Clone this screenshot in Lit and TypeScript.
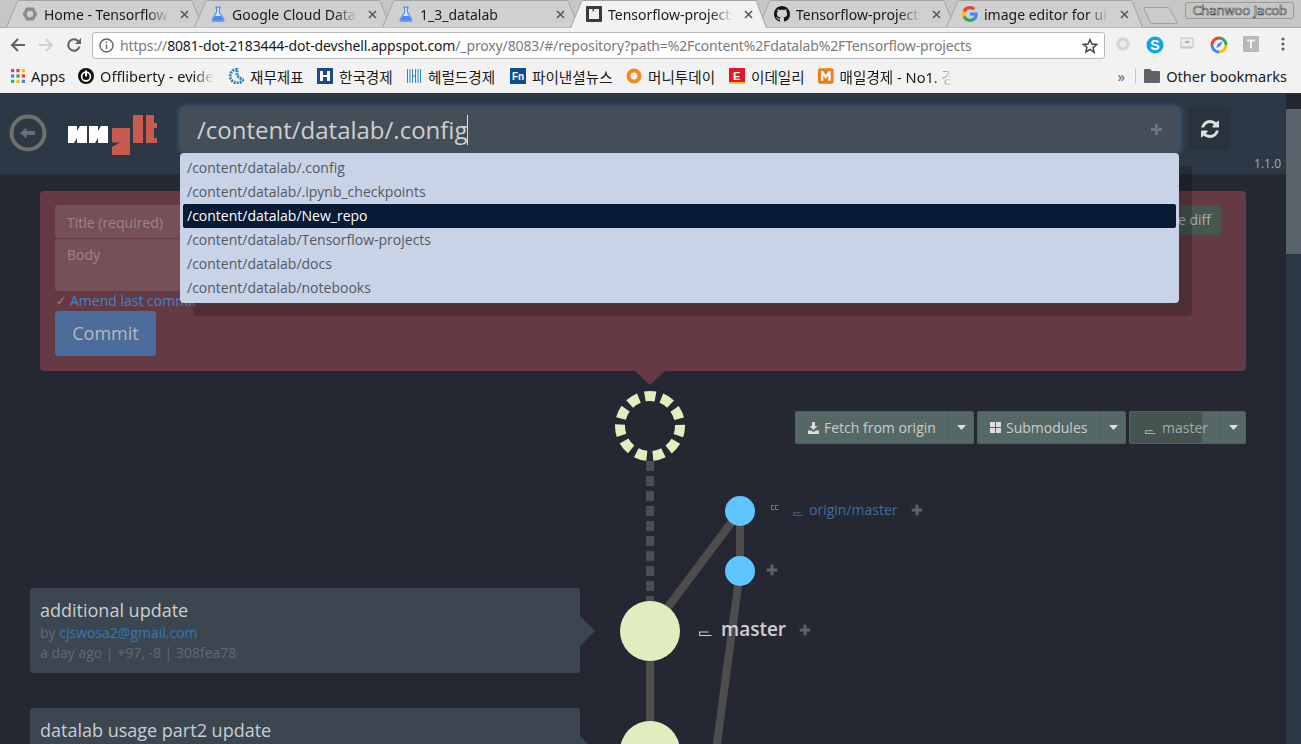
import { LitElement, html, css, svg } from 'lit';
import { customElement } from 'lit/decorators.js';

const flask = html`<svg viewBox="0 0 16 16" width="16" height="16">
  <path d="M6 1h4v1h-.6v4l4.400 7.400c.5 1-.1 1.900-1.200 1.900H3.400c-1.100 0-1.700-.9-1.200-1.900L6.600 6V2H6z" fill="#d6e6fb" stroke="#4a8df0" stroke-width="1.100"/>
  <path d="M4.800 10h6.400l2 3.600c.3.700-.1 1.200-.8 1.200H3.600c-.7 0-1.100-.5-.8-1.200z" fill="#4a8df0"/></svg>`;

const hexIcon = (c: string, hole: string) => html`<svg viewBox="0 0 16 16" width="16" height="16">
  <path d="M4.300 1.500h7.400L15.300 8l-3.600 6.500H4.300L.7 8z" fill="${c}"/><circle cx="8" cy="8" r="3.200" fill="${hole}"/></svg>`;

const tabs = [
  { title: 'Home - Tensorflow', icon: hexIcon('#8b8b8b', '#d0d0d0') },
  { title: 'Google Cloud Datalab', icon: flask },
  { title: '1_3_datalab', icon: flask },
  {
    title: 'Tensorflow-projects',
    active: true,
    icon: html`<svg viewBox="0 0 16 16" width="16" height="16"><rect width="16" height="16" rx="1" fill="#3a3a3a"/><path d="M3 3h3.500v3L8 4.500V3h5v10H3z" fill="#f2f2f2"/></svg>`,
  },
  {
    title: 'Tensorflow-projects',
    icon: html`<svg viewBox="0 0 16 16" width="16" height="16"><path fill="#161614" d="M8 0C3.580 0 0 3.580 0 8c0 3.540 2.290 6.530 5.470 7.590.4.070.55-.17.55-.38 0-.19-.01-.82-.01-1.490-2.010.37-2.530-.49-2.690-.94-.09-.23-.48-.94-.82-1.130-.28-.15-.68-.52-.01-.53.63-.01 1.080.58 1.230.82.720 1.210 1.870.87 2.330.66.070-.52.280-.87.510-1.070-1.780-.2-3.640-.89-3.640-3.950 0-.87.310-1.590.820-2.150-.08-.2-.36-1.020.08-2.120 0 0 .67-.21 2.200.82.640-.18 1.320-.27 2-.27s1.360.09 2 .27c1.530-1.040 2.200-.82 2.200-.82.440 1.100.16 1.920.08 2.120.51.560.82 1.270.82 2.150 0 3.070-1.870 3.750-3.650 3.950.29.250.54.730.54 1.480 0 1.070-.01 1.930-.01 2.200 0 .21.150.46.550.38A8.010 8.010 0 0 0 16 8c0-4.420-3.580-8-8-8z"/></svg>`,
  },
  {
    title: 'image editor for ui design',
    icon: html`<svg viewBox="0 0 16 16" width="16" height="16">
      <path d="M15.700 8.200c0-.6-.05-1.100-.15-1.600H8v3h4.400c-.2 1-.8 1.800-1.600 2.400v2h2.600c1.500-1.400 2.300-3.400 2.300-5.800z" fill="#4285f4"/>
      <path d="M8 16c2.200 0 4-.7 5.400-2l-2.600-2c-.7.500-1.700.800-2.800.800-2.100 0-3.900-1.400-4.600-3.300H.7v2.100C2 14.200 4.800 16 8 16z" fill="#34a853"/>
      <path d="M3.400 9.500c-.4-1-.4-2.100 0-3.100V4.300H.7c-.9 1.800-.9 5.500 0 7.300z" fill="#fbbc05"/>
      <path d="M8 3.200c1.200 0 2.300.4 3.100 1.200l2.300-2.300C12 .8 10.200 0 8 0 4.800 0 2 1.800.7 4.300l2.700 2.100C4.100 4.600 5.900 3.200 8 3.200z" fill="#ea4335"/></svg>`,
  },
];

// width is the slot each bookmark takes in the bar
const bookmarks = [
  { label: 'Apps', width: 67, icon: html`<svg viewBox="0 0 13 13" width="14" height="14"><g>
    ${[['#ea4335', 0, 0], ['#ea4335', 5, 0], ['#fbbc05', 10, 0], ['#4285f4', 0, 5], ['#34a853', 5, 5], ['#ea4335', 10, 5], ['#34a853', 0, 10], ['#fbbc05', 5, 10], ['#4285f4', 10, 10]].map(
      ([c, x, y]) => svg`<rect x="${x}" y="${y}" width="3" height="3" fill="${c}"/>`)}</g></svg>` },
  { label: 'Offliberty - evide', width: 150, fade: true, icon: html`<svg viewBox="0 0 16 16" width="16" height="16"><circle cx="8" cy="8" r="8" fill="#111"/><circle cx="8" cy="8.500" r="4.400" fill="none" stroke="#fff" stroke-width="1.600"/><rect x="7" y="2.500" width="2" height="6" fill="#fff"/></svg>` },
  { label: '재무제표', width: 89, icon: html`<svg viewBox="0 0 16 16" width="16" height="16"><path d="M9 1a7 7 0 1 0 6 11L9 8z" fill="none" stroke="#2b8bb5" stroke-width="3" stroke-dasharray="2 1"/></svg>` },
  { label: '한국경제', width: 89, icon: html`<svg viewBox="0 0 16 16" width="16" height="16"><rect width="16" height="16" fill="#1d4a8c"/><path d="M3 3h3v4h4V3h3v10h-3V9H6v4H3z" fill="#fff"/></svg>` },
  { label: '헤럴드경제', width: 104, icon: html`<svg viewBox="0 0 16 16" width="16" height="16" fill="none" stroke="#2f86c5" stroke-width="1"><path d="M1.500 1v14M4 1v14M6.500 1v14M9.500 1v14M12 1v14M14.500 1v14M6.500 8h3"/></svg>` },
  { label: '파이낸셜뉴스', width: 116, icon: html`<svg viewBox="0 0 16 16" width="16" height="16"><rect width="16" height="16" fill="#0e4c92"/><text x="2" y="12" font-size="10" font-weight="700" font-family="Liberation Sans" fill="#fff">Fn</text></svg>` },
  { label: '머니투데이', width: 103, icon: html`<svg viewBox="0 0 16 16" width="16" height="16"><circle cx="8" cy="8" r="5.500" fill="none" stroke="#f08a18" stroke-width="4"/></svg>` },
  { label: '이데일리', width: 89, icon: html`<svg viewBox="0 0 16 16" width="16" height="16"><rect width="16" height="14" fill="#e3172a"/><rect y="14" width="16" height="2" fill="#f5c518"/><text x="4" y="11.500" font-size="11" font-weight="700" font-family="Liberation Sans" fill="#fff">E</text></svg>` },
  { label: '매일경제 - No1. 경', width: 134, fade: true, icon: html`<svg viewBox="0 0 16 16" width="16" height="16"><rect width="16" height="16" rx="2" fill="#ee7a1a"/><path d="M3 13V3h2.500L8 7l2.500-4H13v10h-2.500V7.500L8 11 5.500 7.500V13z" fill="#fff"/></svg>` },
];

@customElement('browser-chrome')
export class BrowserChrome extends LitElement {
  static styles = css`
    :host {
      display: block;
      font-family: 'Noto Sans', 'Noto Sans CJK KR', sans-serif;
      color: #1a1a1a;
    }
    .strip {
      height: 28px;
      background: #c6c6c6;
      display: flex;
      padding-left: 6px;
      position: relative;
      box-sizing: border-box;
      border-bottom: 1px solid #a9a9a9;
    }
    .tab {
      position: relative;
      width: 197px;
      height: 28px;
      margin-right: -9px;
      display: flex;
      align-items: center;
      padding-left: 16px;
      box-sizing: border-box;
      font-size: 14px;
      flex: none;
    }
    .tab.active {
      z-index: 1;
    }
    .tab-bg {
      position: absolute;
      left: 0;
      top: 0;
    }
    .fav {
      position: relative;
      width: 16px;
      height: 16px;
      margin-right: 6px;
      flex: none;
    }
    .title {
      position: relative;
      width: 128px;
      white-space: nowrap;
      overflow: hidden;
      -webkit-mask-image: linear-gradient(to right, #000 80%, transparent 98%);
    }
    .close {
      position: relative;
      margin-left: 8px;
      width: 9px;
      height: 9px;
    }
    .newtab {
      position: absolute;
      left: 1143px;
      top: 6px;
    }
    .profile {
      position: absolute;
      left: 1185px;
      top: 2px;
      width: 109px;
      height: 17px;
      box-sizing: border-box;
      border: 1px solid #9a9a9a;
      border-radius: 3px;
      font: 13px/15px 'DejaVu Sans', sans-serif;
      letter-spacing: -0.4px;
      text-align: center;
      color: #f4f4f4;
      -webkit-text-stroke: 0.6px #3c3c3c;
    }
    .toolbar {
      height: 34px;
      background: #f2f2f2;
      display: flex;
      align-items: center;
      position: relative;
    }
    .nav {
      width: 28px;
      display: flex;
      justify-content: center;
      flex: none;
    }
    .nav:first-child {
      margin-left: 4px;
    }
    .omni {
      margin-left: 4px;
      width: 1013px;
      height: 27px;
      box-sizing: border-box;
      background: #fff;
      border: 1px solid #b9b9b9;
      border-radius: 3px;
      display: flex;
      align-items: center;
      padding: 1px 6px 0;
      font-size: 14px;
      color: #7b7b7b;
      letter-spacing: -0.14px;
      white-space: nowrap;
    }
    .omni b {
      font-weight: 400;
      color: #1a1a1a;
    }
    .omni .info {
      margin-right: 6px;
      flex: none;
    }
    .omni .star {
      margin-left: auto;
      flex: none;
    }
    .ext {
      display: flex;
      padding-left: 2px;
    }
    .ext span {
      width: 32px;
      display: flex;
      justify-content: center;
    }
    .bookmarks {
      height: 32px;
      background: #f2f2f2;
      border-bottom: 1px solid #2d2f33;
      box-sizing: border-box;
      display: flex;
      align-items: center;
      padding: 0 0 3px 11px;
      font-size: 14.6px;
      white-space: nowrap;
    }
    .bm {
      display: flex;
      align-items: center;
      gap: 6px;
      flex: none;
      overflow: hidden;
    }
    .bm span.fade {
      -webkit-mask-image: linear-gradient(to right, #000 82%, transparent 100%);
      overflow: hidden;
    }
    .bm-right {
      margin-left: auto;
      display: flex;
      align-items: center;
      padding-right: 14px;
    }
    .chev {
      color: #666;
      font-size: 15px;
      margin-right: 10px;
    }
    .sep {
      width: 1px;
      height: 16px;
      background: #c8c8c8;
      margin-right: 8px;
    }
    .folder {
      margin-right: 6px;
    }
  `;

  render() {
    return html`
      <div class="strip">
        ${tabs.map(
          (t) => html`<div class="tab ${t.active ? 'active' : ''}">
            <svg class="tab-bg" width="197" height="28">
              <path d="M.5 ${t.active ? 28 : 27.5} L11.500 1.500 Q12 .5 13 .5 H185 Q186 .5 186.500 1.500 L196.500 ${t.active ? 28 : 27.5}"
                fill="${t.active ? '#f2f2f2' : '#d0d0d0'}" stroke="#a3a3a3"/>
            </svg>
            <span class="fav">${t.icon}</span>
            <span class="title">${t.title}</span>
            <svg class="close" viewBox="0 0 9 9"><path d="M1 1l7 7M8 1L1 8" stroke="#5a5a5a" stroke-width="1.600"/></svg>
          </div>`
        )}
        <svg class="newtab" width="36" height="20"><path d="M1 2.500 Q1 1.500 2 1.500 H25 Q26 1.500 26.500 2.500 L34 16 Q34.500 17.500 33 17.500 H9 Q8 17.500 7.500 16.500z" fill="#cbcbcb" stroke="#a0a0a0"/></svg>
        <div class="profile">Chanwoo Jacob</div>
      </div>
      <div class="toolbar">
        <span class="nav"><svg width="16" height="16" viewBox="0 0 16 16"><path d="M15 8H2.500M8 2 2 8l6 6" fill="none" stroke="#5f6368" stroke-width="2"/></svg></span>
        <span class="nav"><svg width="16" height="16" viewBox="0 0 16 16"><path d="M1 8h12.500M8 2l6 6-6 6" fill="none" stroke="#cfcfcf" stroke-width="2"/></svg></span>
        <span class="nav"><svg width="16" height="16" viewBox="0 0 16 16"><path d="M13.500 9.500a5.700 5.700 0 1 1-1.300-5.300" fill="none" stroke="#5f6368" stroke-width="2"/><path d="M15 1v6H9z" fill="#5f6368"/></svg></span>
        <div class="omni">
          <svg class="info" width="15" height="15" viewBox="0 0 15 15"><circle cx="7.500" cy="7.500" r="6.500" fill="none" stroke="#5f6368" stroke-width="1.400"/><path d="M7.500 6.500v4.500M7.500 3.800v1.500" stroke="#5f6368" stroke-width="1.500"/></svg>
          <span>https://<b>8081-dot-2183444-dot-devshell.appspot.com</b>/_proxy/8083/#/repository?path=%2Fcontent%2Fdatalab%2FTensorflow-projects</span>
          <svg class="star" width="16" height="16" viewBox="0 0 24 24"><path d="M12 2.500l2.900 6.500 7 .7-5.300 4.700 1.600 7L12 17.200l-6.200 3.700 1.600-7L2.100 9.700l7-.7z" fill="none" stroke="#444" stroke-width="2.200"/></svg>
        </div>
        <div class="ext">
          <span>${hexIcon('#d6d6d6', '#ececec')}</span>
          <span><svg width="18" height="18" viewBox="0 0 18 18"><circle cx="9" cy="9" r="8.500" fill="#12a5e6"/><text x="9" y="14" text-anchor="middle" font-size="14" font-weight="700" font-family="Liberation Sans" fill="#fff">S</text></svg></span>
          <span><svg width="14" height="14" viewBox="0 0 14 14"><rect x="1" y="2" width="12" height="9" fill="#ececec" stroke="#c6c6c6"/><rect x="5" y="5" width="4" height="2" fill="#aaa"/><rect x="1" y="11" width="12" height="1.500" fill="#c6c6c6"/></svg></span>
          <span><svg width="18" height="18" viewBox="0 0 18 18" fill="none" stroke-width="3"><path d="M9 2a7 7 0 0 1 7 7" stroke="#34a853"/><path d="M16 9a7 7 0 0 1-7 7" stroke="#fbbc05"/><path d="M9 16a7 7 0 0 1-7-7" stroke="#4285f4"/><path d="M2 9a7 7 0 0 1 7-7" stroke="#ea4335"/><path d="M6 12l1.800-4.200L12.500 5.500l-2 4.500z" fill="#4285f4" stroke="none"/></svg></span>
          <span><svg width="16" height="16" viewBox="0 0 16 16"><rect width="16" height="16" rx="1" fill="#b8b8b8"/><path d="M4 3.500h8v2H9v7H7v-7H4z" fill="#f2f2f2"/></svg></span>
          <span><svg width="4" height="16" viewBox="0 0 4 16" fill="#5f6368"><circle cx="2" cy="3" r="1.600"/><circle cx="2" cy="8" r="1.600"/><circle cx="2" cy="13" r="1.600"/></svg></span>
        </div>
      </div>
      <div class="bookmarks">
        ${bookmarks.map(
          (b) => html`<div class="bm" style="width:${b.width}px">
            ${b.icon}<span class="${b.fade ? 'fade' : ''}">${b.label}</span>
          </div>`
        )}
        <div class="bm-right">
          <span class="chev">»</span>
          <span class="sep"></span>
          <svg class="folder" width="16" height="14" viewBox="0 0 16 14"><path d="M1 0h5l2 2h7a1 1 0 0 1 1 1v10a1 1 0 0 1-1 1H1a1 1 0 0 1-1-1V1a1 1 0 0 1 1-1z" fill="#5f6368"/></svg>
          <span>Other bookmarks</span>
        </div>
      </div>
    `;
  }
}

const suggestions = [
  '/content/datalab/.config',
  '/content/datalab/.ipynb_checkpoints',
  '/content/datalab/New_repo',
  '/content/datalab/Tensorflow-projects',
  '/content/datalab/docs',
  '/content/datalab/notebooks',
];

const commits = [
  { title: 'additional update', author: 'cjswosa2@gmail.com', meta: 'a day ago | +97, -8 | 308fea78' },
  { title: 'datalab usage part2 update', author: 'cjswosa2@gmail.com', meta: '2 days ago | +41, -3 | 9b17c2de' },
];

// places on the graph canvas, in page coordinates
const CANVAS_TOP = 94;
const plusMarks = [[917, 510], [772, 570], [805, 630]];

const branchIcon = (color: string, w = 13, h = 6) => html`<svg width="${w}" height="${h}" viewBox="0 0 13 6"><path d="M.5 5.500h12M.5 5.500v-3.500h9" fill="none" stroke="${color}" stroke-width="1.100"/></svg>`;

const caret = html`<svg width="9" height="5" viewBox="0 0 9 5"><path d="M0 0h9L4.500 5z" fill="#ddd"/></svg>`;

@customElement('ungit-repo')
export class UngitRepo extends LitElement {
  static styles = css`
    :host {
      display: flex;
      height: 650px;
      font-family: 'Open Sans', sans-serif;
      background: #252833;
      overflow: hidden;
    }
    .main {
      flex: 1;
      min-width: 0;
      position: relative;
    }
    .scroll {
      width: 15px;
      background: #2c3845;
      flex: none;
    }
    .scroll-top {
      height: 15px;
      background: #232730;
    }
    .scroll-thumb {
      height: 145px;
      background: #5a636c;
    }
    header {
      position: relative;
      z-index: 3;
      height: 81px;
      box-sizing: border-box;
      background: #2c3845;
      border-bottom: 1px solid #262f3a;
      display: flex;
      align-items: flex-start;
      padding: 13px 0 0 9px;
    }
    .back {
      margin-top: 7px;
      flex: none;
    }
    .logo {
      margin: 8px 22px 0 21px;
      flex: none;
    }
    .path {
      position: relative;
      width: 1000px;
      height: 45px;
      box-sizing: border-box;
      flex: none;
      background: #444e58;
      border-radius: 4px;
      box-shadow: 0 0 6px rgba(88, 150, 210, 0.55);
      display: flex;
      align-items: center;
      padding: 0 18px 0 17px;
      color: #cfcfcf;
      font-size: 24px;
    }
    .cursor {
      width: 1px;
      height: 30px;
      background: #ddd;
    }
    .path .add {
      margin-left: auto;
    }
    .menu {
      position: absolute;
      left: 0;
      top: 46px;
      width: 999px;
      height: 150px;
      box-sizing: border-box;
      background: #c8d3e8;
      border-radius: 4px;
      box-shadow: 13px 13px 0 rgba(0, 0, 0, 0.2);
      padding: 3px;
      font-size: 14px;
      color: #55595f;
    }
    .menu div {
      height: 24px;
      line-height: 24px;
      padding-left: 4px;
      border-radius: 2px;
    }
    .menu div.sel {
      background: #071a36;
      color: #fff;
    }
    .refresh {
      margin-left: 8px;
      width: 43px;
      height: 43px;
      background: #2a333d;
      border-radius: 4px;
      display: flex;
      align-items: center;
      justify-content: center;
      flex: none;
    }
    .version {
      position: absolute;
      right: 5px;
      bottom: 2px;
      font-size: 12px;
      color: #a9adb2;
    }
    .content {
      position: relative;
      padding: 16px 40px 0;
    }
    .staging {
      position: relative;
      z-index: 1;
      height: 180px;
      box-sizing: border-box;
      background: #653a44;
      border-radius: 4px;
      padding: 14px 25px 0 15px;
      display: flex;
      justify-content: space-between;
      align-items: flex-start;
    }
    .staging::after {
      content: '';
      position: absolute;
      left: 595px;
      bottom: -14px;
      border-style: solid;
      border-width: 14px 15px 0;
      border-color: #653a44 transparent transparent;
    }
    .form {
      width: 400px;
      font-size: 14px;
    }
    .field {
      background: #765058;
      border-radius: 3px;
      color: #9c8489;
      padding: 0 12px;
      box-sizing: border-box;
    }
    .field.title {
      height: 33px;
      line-height: 36px;
      margin-bottom: 1px;
    }
    .field.body {
      height: 52px;
      line-height: 32px;
    }
    .amend {
      display: flex;
      gap: 4px;
      color: #4284c4;
      height: 20px;
      line-height: 20px;
      align-items: center;
      padding-left: 1px;
    }
    .amend i {
      font-style: normal;
      color: #9c8489;
      font-size: 12px;
    }
    .commit {
      margin-top: 0;
      width: 101px;
      height: 45px;
      background: #4c6c9b;
      border-radius: 4px;
      color: #b7b9bd;
      font-size: 18px;
      line-height: 45px;
      text-align: center;
    }
    .diff {
      height: 30px;
      line-height: 30px;
      padding: 0 10px;
      background: #47564f;
      color: #a9aeab;
      font-size: 14px;
    }
    .actions {
      position: relative;
      z-index: 1;
      margin-top: 40px;
      display: flex;
      justify-content: flex-end;
      gap: 3px;
      font-size: 14px;
      color: #c9cccb;
    }
    .group {
      display: flex;
      height: 33px;
      background: #566866;
      border-radius: 3px;
      box-shadow: inset 0 0 0 1px #4f605e;
      position: relative;
    }
    .group.dim {
      color: #a3aaa8;
    }
    .group .label {
      display: flex;
      align-items: center;
      gap: 5px;
      padding-left: 13px;
      box-sizing: border-box;
      border-right: 1px solid #4c5d5b;
    }
    .group .drop {
      width: 25px;
      display: flex;
      align-items: center;
      justify-content: center;
    }
    .group .shade {
      position: absolute;
      left: 1px;
      top: 1px;
      bottom: 1px;
      width: 72px;
      background: #46544f;
      border-radius: 3px 0 0 3px;
    }
    .group .label > * {
      position: relative;
    }
    .cards {
      position: relative;
      z-index: 1;
      margin: 144px 0 0 -10px;
      display: flex;
      flex-direction: column;
      gap: 35px;
      width: 550px;
    }
    .card {
      position: relative;
      height: 85px;
      box-sizing: border-box;
      background: #3b4651;
      border-radius: 3px;
      padding: 10px 10px 0;
      font-size: 14px;
      line-height: 20px;
      color: #616a74;
    }
    .card::after {
      content: '';
      position: absolute;
      left: 100%;
      top: 28px;
      border-style: solid;
      border-width: 15px 0 15px 15px;
      border-color: transparent transparent transparent #3b4651;
    }
    .card h3 {
      margin: 0;
      font-size: 18px;
      line-height: 25px;
      font-weight: 400;
      color: #cbcdcf;
    }
    .card a {
      color: #3278b8;
    }
    .graph {
      position: absolute;
      left: 0;
      top: 0;
    }
    .ref {
      position: absolute;
      display: flex;
      align-items: center;
      white-space: nowrap;
      z-index: 1;
    }
    .ref.remote {
      left: 793px;
      top: 405px;
      font-size: 14px;
      color: #3f6d9f;
      gap: 6px;
      height: 20px;
    }
    .ref.local {
      left: 699px;
      top: 521px;
      height: 28px;
      font-size: 19px;
      font-weight: 600;
      color: #cfd0d2;
      gap: 9px;
    }
    .ref.local svg {
      margin-top: 8px;
    }
    .ref.remote svg {
      margin-top: 8px;
    }
    .ticks {
      position: absolute;
      left: 771px;
      top: 411px;
    }
    .plus {
      position: absolute;
      display: flex;
      transform: translate(-5.5px, -5.5px);
    }
  `;

  private plus(color: string) {
    return html`<svg width="11" height="11" viewBox="0 0 11 11"><path d="M5.500 0v11M0 5.500h11" stroke="${color}" stroke-width="3"/></svg>`;
  }

  private renderGraph() {
    return html`<svg class="graph" width="1286" height="650" viewBox="0 ${CANVAS_TOP} 1286 650">
      <g fill="none" stroke="#4d4d4d" stroke-width="8">
        <path d="M650 461V601" stroke-dasharray="10 5"/>
        <path d="M650 631V760M650 631L740 511M740 511V571M740 571L708 811"/>
      </g>
      <circle cx="650" cy="426" r="30" fill="none" stroke="#e2eebe" stroke-width="10"
        stroke-dasharray="11 6.136" stroke-dashoffset="5.500" transform="rotate(-90 650 426)"/>
      <circle cx="740" cy="511" r="15" fill="#5ec5ff"/>
      <circle cx="740" cy="571" r="15" fill="#5ec5ff"/>
      <circle cx="650" cy="631" r="30" fill="#e1ecbf"/>
      <circle cx="650" cy="751" r="30" fill="#e1ecbf"/>
    </svg>`;
  }

  render() {
    return html`
      <div class="main">
        ${this.renderGraph()}
        <header>
          <svg class="back" width="38" height="38" viewBox="0 0 38 38">
            <circle cx="19" cy="19" r="16.500" fill="none" stroke="#6e6e6a" stroke-width="4"/>
            <path d="M11 19l6.500-5.500v3.500H26v4h-8.500v3.500z" fill="#6e6e6a"/>
          </svg>
          <svg class="logo" width="90" height="41" viewBox="0 0 90 41">
            <path fill="#fff" d="M0 11h9v5l3-5h7v17H9v-5l-3 5H0zM21 11h9v5l3-5h7v17H30v-5l-3 5h-6z"/>
            <path fill="#c75b50" d="M44 13h18v27H44v-8l8-4.500h-8zM65 0h10v28H65zM78 0h8v8h3v5h-3v10h3v5H78z"/>
          </svg>
          <div class="path">
            <span>/content/datalab/.config</span><span class="cursor"></span>
            <svg class="add" width="11" height="11" viewBox="0 0 11 11"><path d="M5.500 0v11M0 5.500h11" stroke="#6b747d" stroke-width="3"/></svg>
            <div class="menu">
              ${suggestions.map((s, i) => html`<div class="${i === 2 ? 'sel' : ''}">${s}</div>`)}
            </div>
          </div>
          <div class="refresh">
            <svg width="18" height="18" viewBox="128 128 1536 1536"><path fill="#ddd" d="M1639 1056q0 5-1 7-64 268-268 434.500t-478 166.500q-146 0-282.500-55t-243.500-157l-129 129q-19 19-45 19t-45-19-19-45v-448q0-26 19-45t45-19h448q26 0 45 19t19 45-19 45l-137 137q71 66 161 102t187 36q134 0 250-65t186-179q11-17 53-117 8-23 30-23h192q13 0 22.500 9.500t9.500 22.500zm25-800v448q0 26-19 45t-45 19h-448q-26 0-45-19t-19-45 19-45l138-138q-148-137-349-137-134 0-250 65t-186 179q-11 17-53 117-8 23-30 23h-199q-13 0-22.500-9.500t-9.500-22.500v-7q65-268 270-434.500t480-166.500q146 0 284 55.500t245 156.500l130-129q19-19 45-19t45 19 19 45z"/></svg>
          </div>
          <span class="version">1.1.0</span>
        </header>
        <div class="content">
          <section class="staging">
            <div class="form">
              <div class="field title">Title (required)</div>
              <div class="field body">Body</div>
              <div class="amend"><i>✓</i><span>Amend last commit</span></div>
              <div class="commit">Commit</div>
            </div>
            <div class="diff">Compute diff</div>
          </section>
          <div class="actions">
            <div class="group">
              <div class="label" style="width:153px">
                <svg width="11" height="12" viewBox="0 0 11 12"><path fill="#ddd" d="M4 0h3v4h2.500L5.500 8 1.500 4H4zM0 8.500h3L5.500 10 8 8.500h3V12H0z"/></svg>
                <span>Fetch from origin</span>
              </div>
              <div class="drop" style="width:26px">${caret}</div>
            </div>
            <div class="group">
              <div class="label" style="width:124px">
                <svg width="11" height="11" viewBox="0 0 11 11" fill="#ddd"><rect width="5" height="5"/><rect x="6" width="5" height="5"/><rect y="6" width="5" height="5"/><rect x="6" y="6" width="5" height="5"/></svg>
                <span>Submodules</span>
              </div>
              <div class="drop">${caret}</div>
            </div>
            <div class="group dim">
              <span class="shade"></span>
              <div class="label" style="width:92px;padding-left:16px;gap:6px">
                <span style="margin-top:8px;line-height:0">${branchIcon('#b9bdbb', 11, 5)}</span>
                <span>master</span>
              </div>
              <div class="drop">${caret}</div>
            </div>
          </div>
          <div class="cards">
            ${commits.map(
              (c) => html`<article class="card">
                <h3>${c.title}</h3>
                <div>by <a>${c.author}</a></div>
                <div>${c.meta}</div>
              </article>`
            )}
          </div>
        </div>
        <svg class="ticks" width="8" height="5" viewBox="0 0 8 5"><path d="M3.500.5H.5v4h3M7.500.5h-3v4h3" fill="none" stroke="#4a7fb8"/></svg>
        <div class="ref remote">${branchIcon('#3f6d9f', 10, 5)}<span>origin/master</span></div>
        <div class="ref local">${branchIcon('#cfd0d2')}<span>master</span></div>
        ${plusMarks.map(
          ([x, y]) => html`<span class="plus" style="left:${x}px;top:${y - CANVAS_TOP}px">${this.plus('#5e616b')}</span>`
        )}
      </div>
      <div class="scroll">
        <div class="scroll-top"></div>
        <div class="scroll-thumb"></div>
      </div>
    `;
  }
}

@customElement('app-root')
export class AppRoot extends LitElement {
  static styles = css`
    :host {
      display: block;
      width: 1301px;
      height: 744px;
      overflow: hidden;
    }
  `;

  render() {
    return html`<browser-chrome></browser-chrome><ungit-repo></ungit-repo>`;
  }
}
